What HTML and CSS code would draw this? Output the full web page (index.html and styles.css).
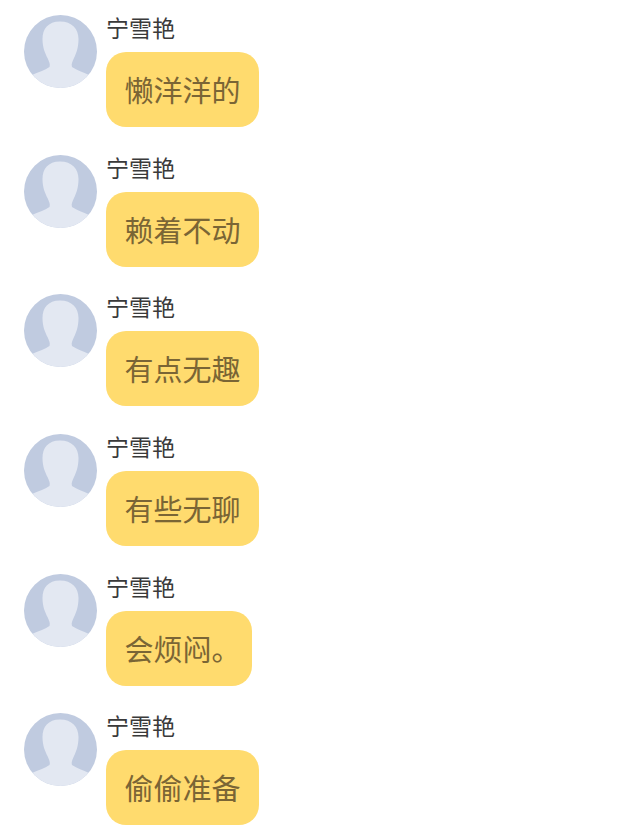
FILE: index.html
```html
<!DOCTYPE html>
<html lang="zh-CN">
<head>
    <meta charset="UTF-8">
    <meta name="viewport" content="width=device-width, initial-scale=1.0">
    <title>宁雪艳</title>
    <link rel="stylesheet" href="styles.css">
</head>
<body>
    <svg class="defs" width="0" height="0">
        <symbol id="avatar" viewBox="0 0 73 73">
            <clipPath id="avatar-clip"><circle cx="36.5" cy="36.5" r="36.5"/></clipPath>
            <g clip-path="url(#avatar-clip)">
                <rect width="73" height="73" fill="#c0cbe0"/>
                <path fill="#e3e8f2" d="M36 6.500C24 6.500 18.500 14 18.500 24C18.500 33 21.500 39 23.500 43C25 46.500 26.500 49 25.500 52C21 55 14 57.500 8 60L8 73L65 73L65 60C59 57.500 53 55 48 52C47 49 48.500 46.500 50 43C52 39 54.500 33 54.500 24C54.500 14 48 6.500 36 6.500Z"/>
            </g>
        </symbol>
    </svg>
    <div class="chat">
        <div class="row">
            <svg class="avatar"><use href="#avatar"/></svg>
            <div class="body">
                <div class="name">宁雪艳</div>
                <div class="bubble">懒洋洋的</div>
            </div>
        </div>
        <div class="row">
            <svg class="avatar"><use href="#avatar"/></svg>
            <div class="body">
                <div class="name">宁雪艳</div>
                <div class="bubble">赖着不动</div>
            </div>
        </div>
        <div class="row">
            <svg class="avatar"><use href="#avatar"/></svg>
            <div class="body">
                <div class="name">宁雪艳</div>
                <div class="bubble">有点无趣</div>
            </div>
        </div>
        <div class="row">
            <svg class="avatar"><use href="#avatar"/></svg>
            <div class="body">
                <div class="name">宁雪艳</div>
                <div class="bubble">有些无聊</div>
            </div>
        </div>
        <div class="row">
            <svg class="avatar"><use href="#avatar"/></svg>
            <div class="body">
                <div class="name">宁雪艳</div>
                <div class="bubble bubble-end">会烦闷。</div>
            </div>
        </div>
        <div class="row">
            <svg class="avatar"><use href="#avatar"/></svg>
            <div class="body">
                <div class="name">宁雪艳</div>
                <div class="bubble">偷偷准备</div>
            </div>
        </div>
    </div>
</body>
</html>
```
FILE: styles.css
```css
html, body {
    height: 100%;
    overflow: hidden;
}
body {
    background-color: #fff;
    margin: 0;
    font-family: "Noto Sans CJK SC", sans-serif;
}
.defs {
    display: block;
    height: 0;
}
.chat {
    display: flex;
    flex-direction: column;
    gap: 27.7px;
    padding: 15px 0 0 24px;
}
.row {
    display: flex;
    gap: 9px;
    height: 112px;
}
.avatar {
    width: 73px;
    height: 73px;
    flex-shrink: 0;
}
.body {
    display: flex;
    flex-direction: column;
    align-items: flex-start;
}
.name {
    font-size: 23px;
    line-height: 28px;
    color: #3a3a3a;
    margin: -2px 0 11px 0;
}
.bubble {
    font-size: 29px;
    line-height: 75px;
    height: 75px;
    padding: 0 18.5px;
    color: #7a6535;
    background-color: #ffdb6e;
    border-radius: 20px;
}
.bubble-end {
    padding-right: 11.5px;
}
```
